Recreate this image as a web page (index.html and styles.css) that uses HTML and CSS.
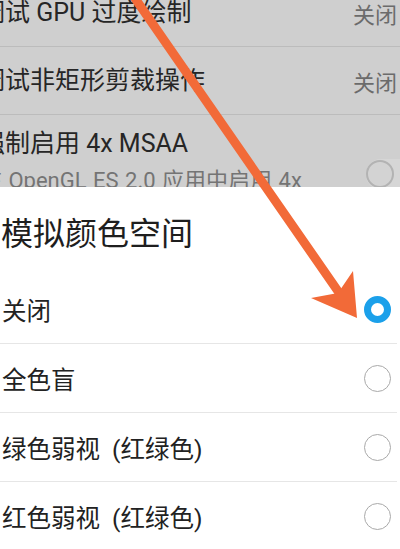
FILE: index.html
```html
<!DOCTYPE html>
<html lang="zh-CN">
<head>
<meta charset="utf-8">
<title>模拟颜色空间</title>
<link rel="stylesheet" href="styles.css">
</head>
<body>
<div class="screen">
  <div class="settings">
    <div class="set-row">
      <span class="set-title">调试 GPU 过度绘制</span>
      <span class="set-value">关闭</span>
    </div>
    <div class="set-row">
      <span class="set-title">调试非矩形剪裁操作</span>
      <span class="set-value">关闭</span>
    </div>
    <div class="set-row set-row-tall">
      <div class="set-text">
        <span class="set-title">强制启用 4x MSAA</span>
        <span class="set-sub">在 OpenGL ES 2.0 应用中启用 4x MSAA</span>
      </div>
      <span class="toggle"><span class="knob"></span></span>
    </div>
  </div>
  <div class="dialog">
    <div class="dialog-title">模拟颜色空间</div>
    <div class="option"><span class="opt-label">关闭</span><span class="radio radio-on"></span></div>
    <div class="option"><span class="opt-label">全色盲</span><span class="radio"></span></div>
    <div class="option"><span class="opt-label">绿色弱视 (红绿色)</span><span class="radio"></span></div>
    <div class="option"><span class="opt-label">红色弱视 (红绿色)</span><span class="radio"></span></div>
  </div>
  <svg class="arrow" width="400" height="549" viewBox="0 0 400 549">
    <line x1="132" y1="-6" x2="342" y2="297" stroke="#f26a38" stroke-width="9" stroke-linecap="round"/>
    <polygon points="357,318 311,298 338,293 353,271" fill="#f26a38"/>
  </svg>
</div>
</body>
</html>
```
FILE: styles.css
```css
html, body {
  margin: 0;
  padding: 0;
}
body {
  width: 400px;
  height: 549px;
  overflow: hidden;
  font-family: Roboto, "Noto Sans CJK SC", sans-serif;
  background: #ffffff;
}
.screen {
  position: relative;
  width: 400px;
  height: 549px;
  overflow: hidden;
}
.settings {
  height: 187px;
  overflow: hidden;
  background: #cfcfcf;
}
.set-row {
  display: flex;
  justify-content: space-between;
  align-items: center;
  height: 67px;
  border-bottom: 1px solid #bcbcbc;
  margin-left: -20px;
  padding-right: 3px;
}
.set-row:first-child {
  margin-top: -21px;
}
.set-title {
  font-size: 25px;
  line-height: 30px;
  color: #262626;
  white-space: nowrap;
}
.set-value {
  font-size: 22px;
  color: #6b6b6b;
  white-space: nowrap;
}
.set-row-tall {
  height: auto;
  align-items: flex-start;
  border-bottom: none;
  padding-top: 14px;
}
.set-text {
  display: flex;
  flex-direction: column;
  width: 345px;
}
.set-sub {
  font-size: 22px;
  line-height: 28px;
  margin-top: 8px;
  color: #747474;
  word-spacing: 1px;
}
.toggle {
  flex: none;
  position: relative;
  width: 34px;
  height: 31px;
  margin-top: 30px;
  margin-right: -3px;
  background: #d6d6d6;
  border-radius: 15px 0 0 15px;
}
.knob {
  position: absolute;
  left: 0;
  top: 1px;
  width: 24px;
  height: 24px;
  border: 2px solid #b3b3b3;
  border-radius: 50%;
  background: #d3d3d3;
}
.dialog {
  background: #ffffff;
  padding-top: 25px;
}
.dialog-title {
  font-size: 32px;
  line-height: 44px;
  color: #1e1e1e;
  padding-left: 1px;
  margin-bottom: 19px;
}
.option {
  display: flex;
  justify-content: space-between;
  align-items: center;
  height: 68px;
  border-bottom: 1px solid #e6e6e6;
  margin-right: 3px;
  padding-left: 2px;
  padding-right: 6px;
}
.opt-label {
  font-size: 24.5px;
  color: #222222;
  white-space: nowrap;
  word-spacing: 6px;
}
.radio {
  width: 25px;
  height: 25px;
  border: 1.5px solid #a9a9a9;
  border-radius: 50%;
  box-sizing: content-box;
}
.radio-on {
  width: 13px;
  height: 13px;
  border: 7px solid #1ba0ea;
}
.arrow {
  position: absolute;
  left: 0;
  top: 0;
  pointer-events: none;
}
```
